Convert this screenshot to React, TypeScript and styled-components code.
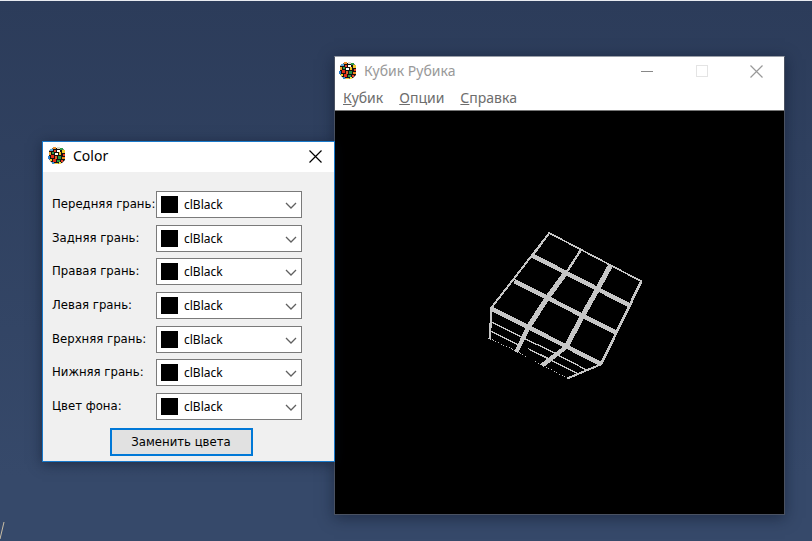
import React from 'react';
import styled, { createGlobalStyle } from 'styled-components';

const Global = createGlobalStyle`
  * { box-sizing: border-box; }
  body { margin: 0; overflow: hidden; }
`;

const Desktop = styled.main`
  position: relative;
  min-height: 100vh;
  overflow: hidden;
  border-top: 1px solid #e8ebf0;
  background: linear-gradient(#2c3c5a, #36496a 88%);
  font-family: "Noto Sans", sans-serif;
`;

const Stroke = styled.svg`
  position: absolute;
  left: 0;
  bottom: 1px;
`;

const CubeWindow = styled.section`
  position: absolute;
  left: 334px;
  top: 55px;
  width: 451px;
  display: flex;
  flex-direction: column;
  border: 1px solid #4a5262;
  border-top-color: #9a9fa8;
  box-shadow: 0 3px 14px rgba(10, 18, 35, 0.5);
`;

const Dialog = styled.section`
  position: absolute;
  left: 42px;
  top: 140px;
  width: 293px;
  display: flex;
  flex-direction: column;
  border: 1px solid #1979ca;
  background: #f0f0f0;
  box-shadow: 0 2px 12px rgba(10, 18, 35, 0.5);
`;

const TitleBar = styled.header<{ $inactive?: boolean }>`
  display: flex;
  align-items: center;
  height: ${p => (p.$inactive ? 29 : 30)}px;
  padding: 0 0 ${p => (p.$inactive ? 1 : 2)}px ${p => (p.$inactive ? 4 : 5)}px;
  background: #fff;
  color: ${p => (p.$inactive ? '#999' : '#000')};
`;

const Title = styled.h1`
  flex: 1;
  margin: 0 0 0 7px;
  font-size: 14px;
  line-height: 20px;
  font-weight: 400;
`;

const CaptionButton = styled.button<{ $width: number }>`
  display: grid;
  place-items: center;
  width: ${p => p.$width}px;
  height: 28px;
  padding: 0;
  border: 0;
  background: none;
  color: inherit;
`;

const MenuBar = styled.nav`
  display: flex;
  gap: 16px;
  height: 24px;
  padding: 0 8px;
  background: #fff;
`;

const MenuItem = styled.button`
  padding: 0;
  border: 0;
  background: none;
  color: #6d6d6d;
  font: 14px/24px "Noto Sans", sans-serif;
`;

const Viewport = styled.div`
  height: 404px;
  border-top: 1px solid #777;
  background: #000;
`;

const Scene = styled.svg`
  display: block;
  width: 100%;
  height: 100%;
`;

const Form = styled.form`
  display: flex;
  flex-direction: column;
  padding: 19px 32px 5px 9px;
`;

const Fields = styled.div`
  display: flex;
  flex-direction: column;
  justify-content: space-between;
  height: 229px;
`;

const Field = styled.div`
  display: flex;
  height: 27px;
`;

const Label = styled.label`
  width: 104px;
  white-space: nowrap;
  color: #000;
  font: 13px/25px "DejaVu Sans Condensed", "Noto Sans", sans-serif;
`;

const ColorBox = styled.div`
  position: relative;
  display: flex;
  align-items: center;
  flex: 1;
  padding-left: 4px;
  border: 1px solid #7a7a7a;
  background: #fff;
`;

const Swatch = styled.span`
  width: 17px;
  height: 17px;
  background: #000;
`;

const Select = styled.select`
  flex: 1;
  height: 25px;
  padding: 0 20px 0 6px;
  border: 0;
  outline: 0;
  appearance: none;
  background: none;
  color: #000;
  font: 12px/25px "Noto Sans", sans-serif;
`;

const Chevron = styled.svg`
  position: absolute;
  right: 4px;
  top: 10px;
  pointer-events: none;
`;

const Submit = styled.button`
  align-self: center;
  width: 143px;
  height: 28px;
  margin: 8px 0 0 8px;
  padding: 0;
  border: 2px solid #0078d7;
  background: #e1e1e1;
  color: #000;
  font: 13px/24px "DejaVu Sans Condensed", "Noto Sans", sans-serif;
`;

const faces = [
  ['front', 'Передняя грань:'],
  ['back', 'Задняя грань:'],
  ['right', 'Правая грань:'],
  ['left', 'Левая грань:'],
  ['top', 'Верхняя грань:'],
  ['bottom', 'Нижняя грань:'],
  ['background', 'Цвет фона:'],
];

const stickers: [number, number, number, number, string][] = [
  [5, 0, 3, 2, '#f0902c'], [9, 0, 3, 2, '#d9dccb'], [12, 1, 3, 2, '#2f9a48'],
  [2, 2, 3, 2, '#58a6dc'], [6, 3, 2, 2, '#e8452c'], [9, 3, 3, 2, '#ffffff'], [14, 3, 3, 3, '#f4c92c'],
  [1, 5, 2, 3, '#f0a024'], [4, 5, 2, 2, '#2f9a48'], [7, 6, 3, 2, '#ffffff'], [11, 5, 2, 3, '#f0c020'], [15, 7, 2, 2, '#ee3a22'],
  [0, 9, 2, 3, '#2a7fd0'], [3, 8, 3, 3, '#e62e1a'], [7, 9, 2, 3, '#e8602a'], [10, 9, 3, 3, '#259448'], [14, 10, 3, 2, '#f08c1c'],
  [2, 12, 2, 2, '#f3d030'], [5, 12, 3, 3, '#e62e1a'], [9, 13, 3, 2, '#2a9a4c'], [13, 13, 2, 2, '#e8402a'],
  [4, 15, 2, 2, '#3592d0'], [7, 16, 3, 1, '#f3cf2a'], [11, 15, 2, 2, '#f6e04a'],
];

const CubeIcon = () => (
  <svg width="18" height="18" viewBox="0 0 18 18" aria-hidden="true">
    <path d="M5 1h9l3 3v9l-3 3-6 1-5-2-2-3V4Z" fill="#16120f" />
    {stickers.map(([x, y, w, h, fill]) => (
      <rect key={`${x}-${y}`} x={x} y={y} width={w} height={h} fill={fill} />
    ))}
  </svg>
);

const Cross = () => (
  <svg width="13" height="13" viewBox="0 0 13 13" aria-hidden="true">
    <path d="M.5.5l12 12M12.5.5l-12 12" stroke="currentColor" strokeWidth="1.2" />
  </svg>
);

const Cube = () => (
  <Scene viewBox="0 0 449 403" role="img" aria-label="Кубик Рубика">
    <g transform="translate(145 114) scale(.33333)" stroke="#c6c6c6" fill="none" shapeRendering="crispEdges">
      <path d="M160 90 208 24 484 169" strokeWidth="5" />
      <path d="M208 24 35 247" strokeWidth="6" />
      <path d="M484 169 363 418" strokeWidth="8" />
      <path d="M302 76 258 144" strokeWidth="7" />
      <path d="M158 92 448 241M103 168 408 323M35 251 363 417" strokeWidth="13" />
      <path d="M258 142 204 216 147 303" strokeWidth="15" />
      <path d="M391 122 354 190 308 272 258 366" strokeWidth="15" />
      <path d="M147 303 109 381" strokeWidth="13" />
      <path d="M258 366 187 421" strokeWidth="13" />
      <path d="M35 247 29 341" strokeWidth="7" />
      <path d="M363 418 263 460" strokeWidth="6" />
      <path d="M35 292 127 337 215 380 318 434M32 318 117 360M143 370 207 402 290 445" strokeWidth="4" />
      <path d="M29 341 112 380 140 396M165 409 263 460" strokeWidth="3" strokeDasharray="4 5" />
    </g>
  </Scene>
);

export default function App() {
  return (
    <>
      <Global />
      <Desktop>
        <Stroke width="5" height="18" viewBox="0 0 5 18" aria-hidden="true">
          <path d="M4 0 0 17" stroke="#c9bda5" fill="none" />
        </Stroke>
        <CubeWindow>
          <TitleBar $inactive>
            <CubeIcon />
            <Title>Кубик Рубика</Title>
            <CaptionButton $width={54} aria-label="Свернуть">
              <svg width="12" height="1" aria-hidden="true"><path d="M0 .5h12" stroke="#888" /></svg>
            </CaptionButton>
            <CaptionButton $width={55} aria-label="Развернуть" disabled>
              <svg width="12" height="12" aria-hidden="true">
                <rect x=".5" y=".5" width="11" height="11" fill="none" stroke="#e4e4e4" />
              </svg>
            </CaptionButton>
            <CaptionButton $width={55} aria-label="Закрыть"><Cross /></CaptionButton>
          </TitleBar>
          <MenuBar>
            <MenuItem><u>К</u>убик</MenuItem>
            <MenuItem><u>О</u>пции</MenuItem>
            <MenuItem><u>С</u>правка</MenuItem>
          </MenuBar>
          <Viewport><Cube /></Viewport>
        </CubeWindow>
        <Dialog>
          <TitleBar>
            <CubeIcon />
            <Title>Color</Title>
            <CaptionButton $width={37} aria-label="Закрыть"><Cross /></CaptionButton>
          </TitleBar>
          <Form onSubmit={e => e.preventDefault()}>
            <Fields>
              {faces.map(([id, label]) => (
                <Field key={id}>
                  <Label htmlFor={id}>{label}</Label>
                  <ColorBox>
                    <Swatch />
                    <Select id={id} defaultValue="clBlack">
                      <option>clBlack</option>
                    </Select>
                    <Chevron width="12" height="8" viewBox="0 0 12 8" aria-hidden="true">
                      <path d="M1 1l5 5 5-5" fill="none" stroke="#606060" strokeWidth="1.3" />
                    </Chevron>
                  </ColorBox>
                </Field>
              ))}
            </Fields>
            <Submit type="submit">Заменить цвета</Submit>
          </Form>
        </Dialog>
      </Desktop>
    </>
  );
}
